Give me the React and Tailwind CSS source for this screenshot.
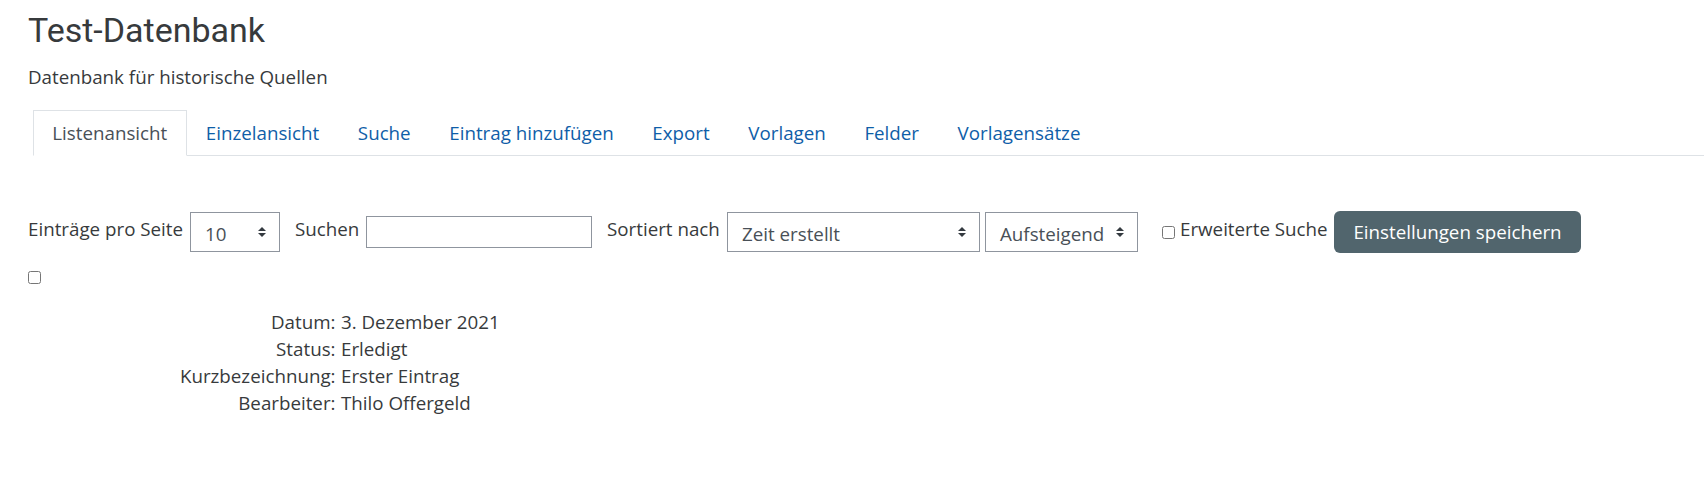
import React from 'react';

const tabs = [
  'Listenansicht',
  'Einzelansicht',
  'Suche',
  'Eintrag hinzufügen',
  'Export',
  'Vorlagen',
  'Felder',
  'Vorlagensätze',
];

const fields = [
  ['Datum:', '3. Dezember 2021'],
  ['Status:', 'Erledigt'],
  ['Kurzbezeichnung:', 'Erster Eintrag'],
  ['Bearbeiter:', 'Thilo Offergeld'],
];

// up/down caret used by the select boxes
const Caret = () => (
  <svg width="8" height="10" viewBox="0 0 4 5" className="shrink-0">
    <path d="M2 0L0 2h4zm0 5L0 3h4z" fill="#343a40" />
  </svg>
);

const Select = ({ value, className }) => (
  <div
    className={`flex items-center justify-between h-[40px] pl-[14px] pr-[13px] border border-[#8f959e] bg-white text-[#495057] shrink-0 ${className}`}
  >
    <span className="pt-[3px]">{value}</span>
    <Caret />
  </div>
);

const Checkbox = () => (
  <input type="checkbox" className="w-[13px] h-[13px] m-0 shrink-0" />
);

const App = () => {
  return (
    <div className="min-h-screen bg-white pt-[10px] pl-[28px] text-[18.75px] leading-[28px] text-[#373a3c] font-['Open_Sans',sans-serif]">
      <h2 className="font-['Roboto',sans-serif] text-[34px] leading-[41px] font-normal text-[#373a3c]">
        Test-Datenbank
      </h2>
      <p className="mt-[12px]">Datenbank für historische Quellen</p>

      <ul className="flex mt-[18.5px] ml-[5px] border-b border-[#dee2e6]">
        {tabs.map((t, i) => (
          <li key={t} className="-mb-px">
            <a
              className={
                i === 0
                  ? 'block px-[18.3px] py-[8.3px] border border-[#dee2e6] border-b-white bg-white text-[#495057]'
                  : 'block px-[18.3px] py-[8.3px] border border-transparent text-[#0f5ea8]'
              }
            >
              {t}
            </a>
          </li>
        ))}
      </ul>

      <div className="flex items-center h-[42px] mt-[55px] whitespace-nowrap">
        <span className="w-[156px] mb-[6px] shrink-0">Einträge pro Seite</span>
        <Select value="10" className="w-[90px] ml-[6px]" />
        <span className="w-[71px] ml-[15px] mb-[6px] shrink-0">Suchen</span>
        <input
          type="text"
          className="w-[226px] h-[32px] border border-[#8f959e] bg-white outline-none shrink-0"
        />
        <span className="w-[120px] ml-[15px] mb-[6px] shrink-0">Sortiert nach</span>
        <Select value="Zeit erstellt" className="w-[252.5px]" />
        <Select value="Aufsteigend" className="w-[152.5px] ml-[5.5px]" />
        <div className="flex items-center ml-[24.5px] shrink-0">
          <Checkbox />
          <span className="w-[154px] ml-[5px] mb-[6px]">Erweiterte Suche</span>
        </div>
        <button className="w-[247px] h-[42px] rounded-[6px] bg-[#51656d] text-white shrink-0">
          Einstellungen speichern
        </button>
      </div>

      <div className="mt-[18px] h-[13px] flex">
        <Checkbox />
      </div>

      <div className="mt-[23.5px]">
        {fields.map(([label, value]) => (
          <div key={label} className="flex leading-[27.3px]">
            <div className="w-[307.5px] text-right">{label}</div>
            <div className="pl-[5.5px]">{value}</div>
          </div>
        ))}
      </div>
    </div>
  );
};

export default App;
